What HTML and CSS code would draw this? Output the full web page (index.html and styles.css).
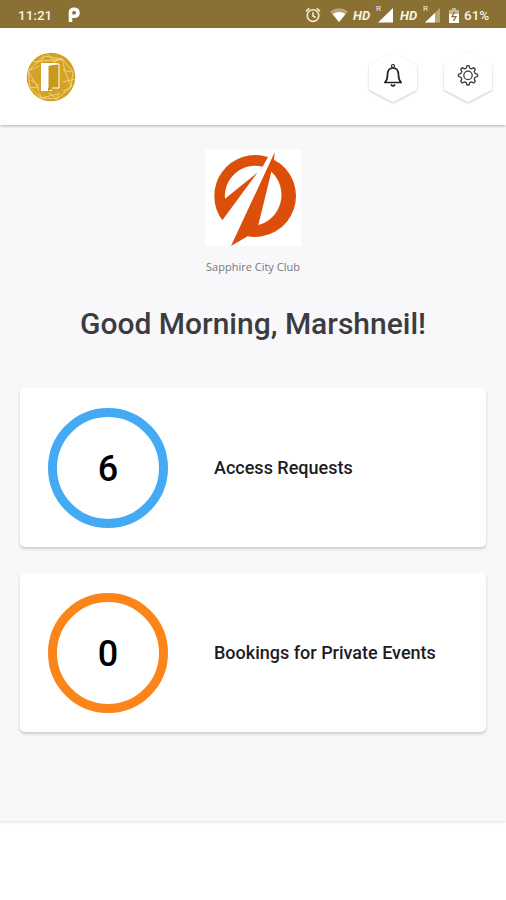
FILE: index.html
```html
<!DOCTYPE html>
<html lang="en">
<head>
<meta charset="utf-8">
<title>Sapphire City Club</title>
<link rel="stylesheet" href="styles.css">
</head>
<body>
<div class="status">
  <span class="time">11:21</span>
  <svg class="parking" width="12" height="16" viewBox="0 0 12 16"><path fill="none" stroke="#fff" stroke-width="3.6" stroke-linejoin="round" d="M2.5 15V5Q2.8 2.3 6 2.3Q10 2.3 10 5.8Q10 9.3 6 9.3H4"/></svg>
  <div class="indicators">
    <svg class="alarm" width="16" height="16" viewBox="0 0 16 16" fill="none" stroke="#f4ecd2" stroke-width="1.6"><circle cx="8" cy="8.6" r="5.8"/><path d="M1 4.4L4.3 1.3M15 4.4L11.7 1.3M8 5.2V9L10.6 10.5"/></svg>
    <svg class="wifi" width="18" height="14" viewBox="0 0 18 14"><path fill="#b9a373" d="M0 3.5Q9-3 18 3.5L9 14Z"/><path fill="#fff" d="M2.5 6Q9 1.8 15.500 6L9 14Z"/></svg>
    <span class="hd">HD</span>
    <span class="cell"><span class="roam">R</span><svg width="18" height="16" viewBox="0 0 18 16"><path fill="#fff" d="M2 15.500L17 1V15.500Z"/></svg></span>
    <span class="hd hd-second">HD</span>
    <span class="cell"><span class="roam">R</span><svg width="18" height="16" viewBox="0 0 18 16"><path fill="#baa577" d="M2 15.500L17 1V15.500Z"/><path fill="#fff" d="M2 15.500L12 6V15.500Z"/></svg></span>
    <svg class="battery" width="10" height="15" viewBox="0 0 10 15"><path fill="#c9b98f" d="M3 0H7V2H10V6H0V2H3Z"/><path fill="#fff" d="M0 6H10V15H0Z"/><path fill="none" stroke="#8b7034" stroke-width="1.300" d="M5.500 4L3 8.700H7L4.500 13"/></svg>
    <span class="percent">61%</span>
  </div>
</div>
<header class="header">
  <svg class="brand" width="50" height="50" viewBox="0 0 50 50">
    <circle cx="25" cy="25" r="24.300" fill="#d4a224"/>
    <g fill="none" stroke="#f0d68a" stroke-width=".9"><path d="M2 19L18 4L36 7L47 20L45 35L31 47L15 46L4 35ZM2 19L13 14L18 4M13 14L36 7L39 19L47 20M39 19L45 35L32 42L31 47M32 42L15 46L12 36L4 35M12 36L2 19M7 10L36 7M12 36L49 27M5 28L31 47M20 1L39 19"/></g>
    <path fill="#d4a224" d="M13 10H37V41H13Z"/>
    <path fill="#fff" d="M15 11H33V14H22V36H26V39H15Z"/>
    <path fill="#c9981c" d="M22 14L33 11V35L22 39Z"/>
    <path fill="none" stroke="#fff" stroke-width="1" d="M22 36V13L33 12V36H26"/>
  </svg>
  <nav class="actions">
    <span class="hex"><svg width="54" height="58" viewBox="0 0 54 58"><path class="plate" d="M4 16L27 3L50 16V39L27 51L4 39Z"/><g fill="none" stroke="#222" stroke-width="1.700" stroke-linejoin="round"><circle cx="27" cy="16" r="1.500" stroke-width="1.200"/><path d="M27 18C22.500 18 21.500 21.500 21.500 25Q21.500 30 18.800 32.500H35.200Q32.500 30 32.500 25C32.500 21.500 31.500 18 27 18Z"/><path d="M25 34.500Q27 37.500 29 34.500"/></g></svg></span>
    <span class="hex"><svg width="54" height="58" viewBox="0 0 54 58"><path class="plate" d="M4 16L27 3L50 16V39L27 51L4 39Z"/><g fill="none" stroke="#3d3d3d" stroke-width="1.300" stroke-linejoin="round"><path d="M25.300 18L26 15.700H28L28.700 18L30.500 18.800L32.700 17.700L34.300 19.300L33.200 21.500L34 23.300L36.500 24.300V26.500L34 27.300L33.200 29.200L34.300 31.400L32.700 33L30.500 31.900L28.700 32.700L28 35H26L25.300 32.700L23.500 31.900L21.300 33L19.700 31.400L20.800 29.200L20 27.300L17.500 26.500V24.300L20 23.300L20.800 21.500L19.700 19.300L21.300 17.700L23.500 18.800Z"/><circle cx="27" cy="25.400" r="4.200"/></g></svg></span>
  </nav>
</header>
<main class="main">
  <svg class="club-logo" width="96" height="96" viewBox="30 30 288 288">
    <path fill="#fff" d="M30 30H318V318H30Z"/>
    <path fill="#dc4f0b" d="M82 241A123 123 0 0 1 219 51L203 80A91 91 0 0 0 90 176L188 97Z"/>
    <path fill="#dc4f0b" fill-rule="evenodd" d="M239 37L237 59A123 123 0 0 1 158 289L108 318ZM229 95L190 255A94 94 0 0 0 229 95Z"/>
  </svg>
  <p class="club-name">Sapphire City Club</p>
  <h1 class="greeting">Good Morning, Marshneil!</h1>
  <section class="cards">
    <article class="card"><div class="ring blue">6</div><h2 class="label">Access Requests</h2></article>
    <article class="card"><div class="ring orange">0</div><h2 class="label">Bookings for Private Events</h2></article>
  </section>
</main>
</body>
</html>
```
FILE: styles.css
```css
* { box-sizing: border-box; }
body { margin: 0; height: 900px; overflow: hidden; background: #fff; font-family: Roboto, "Liberation Sans", sans-serif; display: flex; flex-direction: column; }
svg { display: block; flex: none; }
.status { height: 28px; flex: none; display: flex; align-items: center; padding: 2px 15px 0 18px; background: #8b7034; color: #f8f2e2; white-space: nowrap; }
.time { width: 50px; font-size: 13.5px; font-weight: 500; }
.indicators { margin-left: auto; display: flex; align-items: center; }
.wifi { margin-left: 9px; }
.hd { width: 20px; margin-left: 5px; font-size: 13px; font-weight: 700; font-style: italic; }
.hd-second { margin-left: 5px; }
.cell { display: flex; width: 19px; margin-left: 3px; position: relative; }
.roam { position: absolute; left: 0; top: -3px; font-size: 8px; }
.battery { margin-left: 7px; }
.percent { width: 27px; margin-left: 5px; font-size: 13.5px; font-weight: 500; }
.header { position: relative; height: 97px; flex: none; display: flex; justify-content: space-between; align-items: flex-start; padding: 24px 11px 0 26px; background: #fff; box-shadow: 0 1px 3px rgba(0,0,0,.28); }
.actions { display: flex; gap: 21px; margin-top: -2px; }
.plate { fill: #fff; stroke: #fff; stroke-width: 2; stroke-linejoin: round; filter: drop-shadow(0 1px 1px rgba(0,0,0,.22)); }
.main { height: 696px; flex: none; display: flex; flex-direction: column; align-items: center; padding: 25px 20px 0; background: #f8f8fb; box-shadow: 0 1px 3px rgba(0,0,0,.14); }
.club-name { margin: 13px 0 0; height: 16px; line-height: 16px; font-family: "Open Sans", sans-serif; font-size: 11px; color: #77777a; white-space: nowrap; }
.greeting { margin: 28px 0 0; height: 42px; line-height: 42px; font-size: 30px; font-weight: 500; color: #3c3c40; white-space: nowrap; }
.cards { width: 466px; margin-top: 43px; display: flex; flex-direction: column; gap: 26px; }
.card { height: 159px; display: flex; align-items: center; padding-left: 28px; border-radius: 5px; background: #fff; box-shadow: 0 2px 3px rgba(0,0,0,.18); }
.ring { width: 120px; height: 120px; flex: none; display: flex; align-items: center; justify-content: center; border: 9px solid; border-radius: 50%; font-size: 36px; font-weight: 500; padding-top: 3px; }
.ring::first-line { color: #3c3c40; }
.blue { border-color: #43aaf3; }
.orange { border-color: #fb8518; }
.label { margin: 0 0 0 46px; font-size: 18px; font-weight: 500; color: #1c1c1e; white-space: nowrap; }
```
